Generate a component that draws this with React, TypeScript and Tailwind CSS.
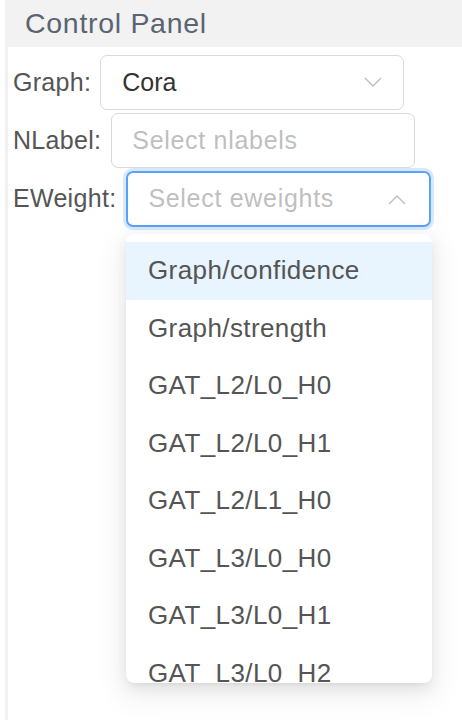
import React from "react";

const options = [
  "Graph/confidence",
  "Graph/strength",
  "GAT_L2/L0_H0",
  "GAT_L2/L0_H1",
  "GAT_L2/L1_H0",
  "GAT_L3/L0_H0",
  "GAT_L3/L0_H1",
  "GAT_L3/L0_H2",
];

function Chevron({ up }: { up?: boolean }) {
  return (
    <svg width="18" height="11" viewBox="0 0 18 11" fill="none">
      <polyline
        points={up ? "1,10 9,2 17,10" : "1,1 9,9 17,1"}
        stroke="#bdbdbd"
        strokeWidth="1.4"
      />
    </svg>
  );
}

export default function App() {
  return (
    <div
      className="flex w-[462px] h-[720px] bg-white overflow-hidden"
      style={{ fontFamily: '"Liberation Sans", Arial, sans-serif' }}
    >
      <div className="w-[5px] shrink-0" />
      <div className="w-[3px] shrink-0 bg-[#f1f1f1]" />
      <div className="flex-1 flex flex-col">
        {/* Header */}
        <div className="h-[47px] bg-[#f2f2f2] pl-[17px] flex items-center text-[28.5px] tracking-[0.7px] text-[#5b6470]">
          Control Panel
        </div>

        <div className="flex flex-col gap-[3px] pl-[5px] pt-[8px]">
          {/* Graph */}
          <div className="flex items-center gap-[9px]">
            <span className="text-[25px] tracking-[0.3px] text-[#555]">Graph:</span>
            <div className="w-[304px] h-[55px] border-[1.5px] border-[#d9d9d9] rounded-[7px] flex items-center justify-between pl-[21px] pr-[21px]">
              <span className="text-[25px] text-[#333]">Cora</span>
              <Chevron />
            </div>
          </div>

          {/* NLabel */}
          <div className="flex items-center gap-[10px]">
            <span className="text-[25px] tracking-[0.3px] text-[#555]">NLabel:</span>
            <div className="w-[304px] h-[55px] border-[1.5px] border-[#d9d9d9] rounded-[7px] flex items-center pl-[20px]">
              <span className="text-[25px] tracking-[0.7px] text-[#bfbfbf]">Select nlabels</span>
            </div>
          </div>

          {/* EWeight */}
          <div className="relative flex items-center gap-[10px]">
            <span className="text-[25px] tracking-[0.3px] text-[#555]">EWeight:</span>
            <div className="w-[305px] h-[56px] border-2 border-[#5aa2f6] rounded-[7px] ring-[3px] ring-[#d8e9fd] flex items-center justify-between pl-[20px] pr-[23px]">
              <span className="text-[25px] tracking-[0.7px] text-[#bfbfbf]">Select eweights</span>
              <Chevron up />
            </div>

            {/* Dropdown */}
            <div className="absolute left-[113px] top-[63px] w-[306px] h-[449px] bg-white rounded-[8px] shadow-[0_6px_16px_rgba(0,0,0,0.08),0_3px_6px_-4px_rgba(0,0,0,0.12),0_9px_28px_8px_rgba(0,0,0,0.05)] overflow-hidden pt-[8px] z-10">
              {options.map((o, i) => (
                <div
                  key={o}
                  className={`h-[57.5px] flex items-center pl-[22px] text-[26px] tracking-[0.4px] text-[#555] ${
                    i === 0 ? "bg-[#e8f4fe]" : ""
                  }`}
                >
                  {o}
                </div>
              ))}
            </div>
          </div>
        </div>
      </div>
    </div>
  );
}
